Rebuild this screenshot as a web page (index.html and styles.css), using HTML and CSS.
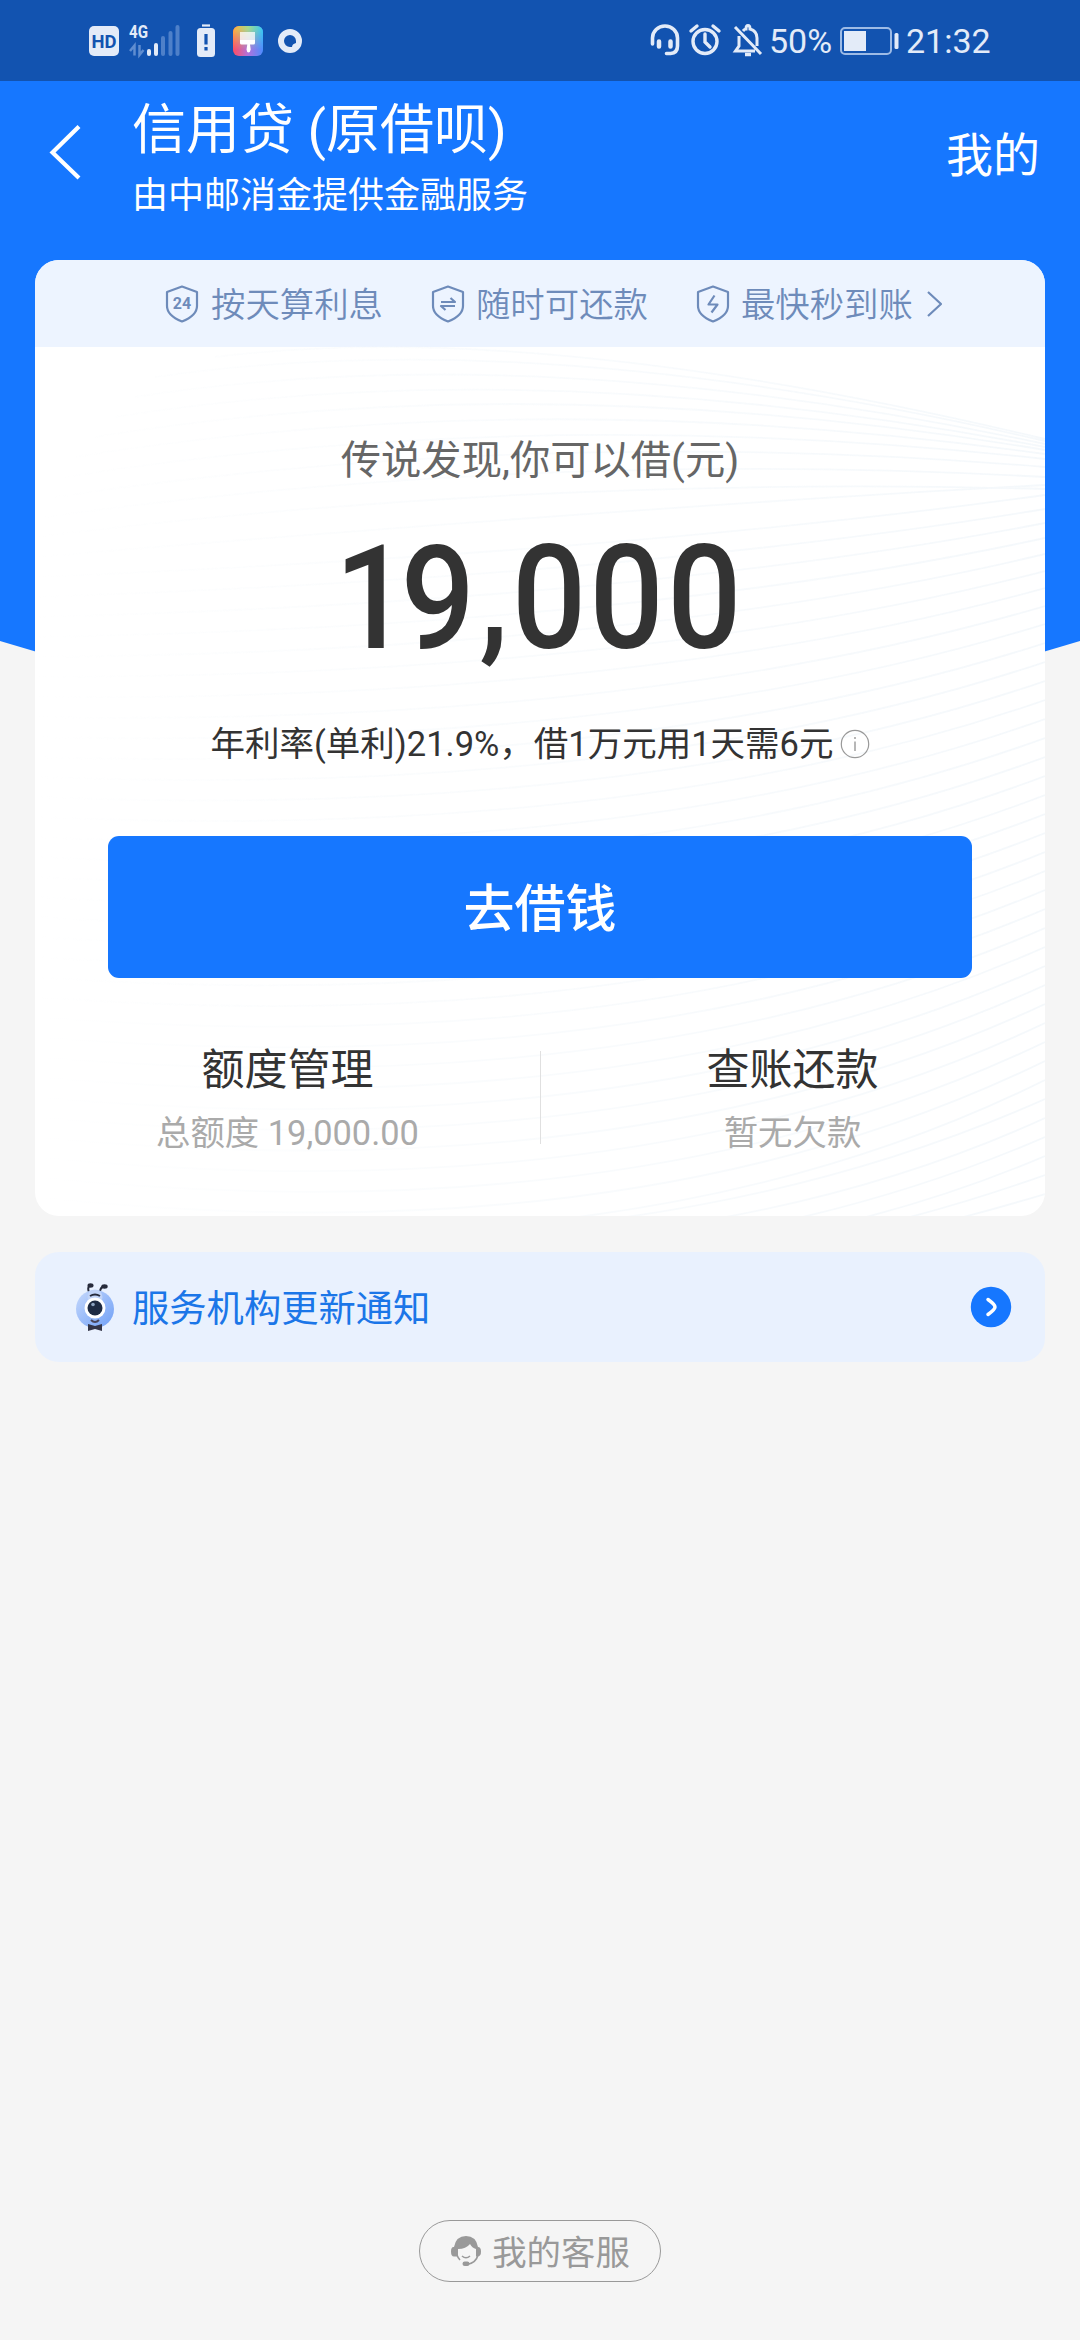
FILE: index.html
```html
<!DOCTYPE html>
<html lang="zh-CN">
<head>
<meta charset="utf-8">
<title>信用贷</title>
<link rel="stylesheet" href="styles.css">
</head>
<body>
<div class="screen">
  <div class="statusbar">
    <div class="status-left">
      <svg class="ic-hd" width="30" height="30" viewBox="0 0 30 30"><rect width="30" height="30" rx="5" fill="#e3ebf8"/><text x="15" y="22" text-anchor="middle" textLength="25" lengthAdjust="spacingAndGlyphs" class="hd-text">HD</text></svg>
      <svg class="ic-signal" width="52" height="34" viewBox="0 0 52 34"><text x="0" y="15" textLength="19" lengthAdjust="spacingAndGlyphs" class="g-text">4G</text><g fill="#e3ebf8"><rect x="18" y="26" width="4" height="7" rx="2"/><rect x="25" y="20" width="4" height="13" rx="2"/></g><g fill="#4e80c9"><rect x="32" y="13" width="4" height="20" rx="2"/><rect x="39.500" y="8" width="4" height="25" rx="2"/><rect x="46.500" y="2" width="4" height="31" rx="2"/></g><path d="M1 28l4.500-5.500v10M10.500 22v10l4-5" fill="none" stroke="#5f8dd0" stroke-width="2.500"/></svg>
      <svg class="ic-alert" width="18" height="33" viewBox="0 0 18 33"><path d="M5 1.500h8" stroke="#e3ebf8" stroke-width="2.200"/><rect y="4" width="18" height="29" rx="3.500" fill="#e3ebf8"/><path d="M9 10v10.500M9 23v3.500" stroke="#1253b0" stroke-width="3.200"/></svg>
      <svg class="ic-brush" width="30" height="30" viewBox="0 0 30 30"><defs><linearGradient id="g1"><stop offset="0" stop-color="#ff4d62"/><stop offset=".5" stop-color="#b072dd"/><stop offset="1" stop-color="#4c8dff"/></linearGradient><linearGradient id="g2" x2="1" y2="0"><stop offset="0" stop-color="#ffad3c"/><stop offset=".5" stop-color="#a7d98c"/><stop offset="1" stop-color="#35c9f5"/></linearGradient><linearGradient id="fade" x2="0" y2="1"><stop offset=".1" stop-color="#fff"/><stop offset=".8" stop-color="#000"/></linearGradient><mask id="m"><rect width="30" height="30" fill="url(#fade)"/></mask></defs><rect width="30" height="30" rx="6" fill="url(#g1)"/><rect width="30" height="30" rx="6" fill="url(#g2)" mask="url(#m)"/><path d="M7 6h15v8H7z" fill="#fff" opacity=".75"/><path d="M7 14h15v3q0 1.500-1.500 1.500H17l.7 5q-.5 3-2.200 3t-2-3l.8-5H8.500Q7 18.500 7 17z" fill="#fff"/></svg>
      <svg class="ic-ring" width="24" height="24" viewBox="0 0 24 24"><path fill-rule="evenodd" fill="#e3ebf8" d="M12 0a12 12 0 1 1 0 24a12 12 0 0 1 0-24zM12 6a6 6 0 0 0 0 12h2q0-3 4-4v-2a6 6 0 0 0-6-6z"/></svg>
    </div>
    <div class="status-right">
      <svg class="ic-head" width="30" height="32" viewBox="0 0 30 32" fill="none" stroke="#e3ebf8" stroke-linecap="round"><path d="M2.500 20v-6a12.500 12 0 0 1 25 0v8q0 7-7 7.500h-4" stroke-width="3.600"/><path d="M9 17.500v5M20.500 17.500v5" stroke-width="4.500"/></svg>
      <svg class="ic-alarm" width="32" height="32" viewBox="0 0 32 32" fill="none" stroke="#e3ebf8" stroke-width="3.400"><circle cx="16" cy="17.500" r="12"/><path d="M16 10v8l5 5M2 7l6-5M24 2l6 5" stroke-linecap="round"/></svg>
      <svg class="ic-bell" width="29" height="33" viewBox="0 0 29 33" fill="none" stroke="#e3ebf8" stroke-width="3"><path d="M2 3l26 27M6 12v10l-3.500 5H22M10 7q1.500-2 3-2q0-3.500 2-3.500t2 3.500q7 2 7 9v8"/><path d="M12 30.500h6" stroke-width="3.500"/></svg>
      <span class="percent">50%</span>
      <svg class="ic-batt" width="59" height="28" viewBox="0 0 59 28"><rect x="1" y="1" width="50" height="26" rx="4" fill="none" stroke="#9dbbe6" stroke-width="2"/><rect x="4" y="4" width="22" height="20" fill="#e3ebf8"/><rect x="54.500" y="6" width="4" height="16" rx="1.500" fill="#e3ebf8"/></svg>
      <span class="clock">21:32</span>
    </div>
  </div>

  <header class="navbar">
    <svg class="back" width="34" height="54" viewBox="0 0 34 54"><path d="M32 1.500L5.500 27.500L32 53" fill="none" stroke="#fff" stroke-width="4.200"/></svg>
    <div class="titles">
      <h1>信用贷 (原借呗)</h1>
      <p>由中邮消金提供金融服务</p>
    </div>
    <a class="mine">我的</a>
  </header>

  <main class="content">
    <section class="card">
      <div class="perks">
        <div class="perk"><svg width="34" height="38" viewBox="0 0 34 38"><path class="line" d="M17 1.500L32 7v14q0 9.500-15 15.500Q2 30.500 2 21V7z"/><text x="17" y="24" text-anchor="middle" class="n24">24</text></svg><span>按天算利息</span></div>
        <div class="perk"><svg width="34" height="38" viewBox="0 0 34 38"><path class="line" d="M17 1.500L32 7v14q0 9.500-15 15.500Q2 30.500 2 21V7z"/><path class="line" d="M10 17h14l-4.500-4M24 21H10l4.500 4"/></svg><span>随时可还款</span></div>
        <div class="perk"><svg width="34" height="38" viewBox="0 0 34 38"><path class="line" d="M17 1.500L32 7v14q0 9.500-15 15.500Q2 30.500 2 21V7z"/><path class="line" d="M18.500 10.500l-6 9h9l-6 8"/></svg><span>最快秒到账</span></div>
        <svg class="perk-more" width="18" height="28" viewBox="0 0 18 28"><path class="line" d="M2 2l13 12L2 26"/></svg>
      </div>
      <div class="offer">
        <svg class="waves" viewBox="0 0 1010 869" fill="none">
          <defs>
            <linearGradient id="wf"><stop offset="0" stop-color="#f4f8fb" stop-opacity="0"/><stop offset=".5" stop-color="#f4f8fb" stop-opacity=".7"/><stop offset="1" stop-color="#f1f6fa"/></linearGradient>
          </defs>
          <g stroke="url(#wf)" stroke-width="1.800">
            <path d="M180 10Q500-30 1010 92M120 30Q500-25 1010 94M100 50Q500-12 1010 97M80 70Q500 3 1010 100M60 90Q500 18 1010 103M40 110Q500 36 1010 107M30 130Q500 56 1010 112M20 150Q500 78 1010 120M10 170Q500 102 1010 130M0 190Q500 128 1010 142"/>
            <path d="M0 210Q600 160 1010 138M0 230Q600 205 1010 148M0 250Q600 230 1010 162M0 270Q600 255 1010 176M0 290Q600 280 1010 191M0 310Q600 305 1010 207M0 330Q600 330 1010 224M0 350Q600 355 1010 241M0 370Q600 380 1010 259M0 390Q600 404 1010 277M0 410Q600 428 1010 296M0 430Q600 452 1010 315M0 450Q600 474 1010 334M0 470Q600 496 1010 353M0 490Q600 518 1010 372"/>
            <path d="M0 510Q600 540 1010 391M0 530Q600 562 1010 410M0 550Q600 584 1010 429M0 570Q600 606 1010 448M0 590Q600 628 1010 467M0 610Q600 650 1010 486M0 630Q600 672 1010 505M0 650Q600 694 1010 524M0 670Q600 716 1010 543M0 690Q600 738 1010 562M0 710Q600 760 1010 581M0 730Q600 782 1010 600M0 750Q600 804 1010 619M0 770Q600 826 1010 638M0 790Q600 848 1010 657M0 810Q600 870 1010 676M0 830Q600 892 1010 695M0 850Q600 914 1010 714M0 870Q600 936 1010 733M300 890Q700 890 1010 752M400 900Q750 890 1010 771M500 910Q780 890 1010 790M600 910Q820 890 1010 809M700 905Q850 885 1010 828M800 900Q900 880 1010 847"/>
          </g>
        </svg>
        <p class="caption">传说发现,你可以借(元)</p>
        <div class="amount"><span class="digits"><b>1</b>9<i>,</i>000</span></div>
        <p class="rate">年利率(单利)21.9%，借1万元用1天需6元<svg width="30" height="30" viewBox="0 0 30 30"><circle cx="15" cy="15" r="13.700" fill="none" stroke="#999" stroke-width="1.200"/><path d="M15 12.500v9.500M15 8v2" stroke="#999" stroke-width="1.400"/></svg></p>
        <button class="borrow"><span>去借钱</span></button>
        <div class="entries">
          <div class="entry"><h2>额度管理</h2><p>总额度 19,000.00</p></div>
          <div class="entry"><h2>查账还款</h2><p>暂无欠款</p></div>
        </div>
      </div>
    </section>

    <section class="notice">
      <svg class="mascot" width="40" height="50" viewBox="0 0 40 50"><defs><linearGradient id="mb" x1="0" y1="0" x2="1" y2="1"><stop offset="0" stop-color="#c6d9fc"/><stop offset="1" stop-color="#6f9ff6"/></linearGradient></defs><path d="M14 10q-2-4 1-7M25 10q0-5 5-6" fill="none" stroke="#272b3b" stroke-width="2"/><ellipse cx="15.500" cy="3.500" rx="3" ry="2.200" fill="#272b3b"/><ellipse cx="29.500" cy="4.500" rx="3.200" ry="2.200" fill="#272b3b"/><circle cx="20" cy="27" r="19" fill="url(#mb)"/><circle cx="20" cy="15" r="7.500" fill="#c1d4f8"/><path d="M15 14q5-3 10 0" stroke="#272b3b" stroke-width="2" fill="none"/><circle cx="20" cy="26" r="10.500" fill="#fff"/><circle cx="20" cy="26" r="7.500" fill="#1e2b43"/><circle cx="18" cy="22.500" r="1.800" fill="#8da3bf"/><path d="M16 38q4 4 8 0" stroke="#4a4559" stroke-width="2" fill="none"/><path d="M13 42l7 2 7-2v7l-7-2-7 2z" fill="#343547"/></svg>
      <span class="notice-text">服务机构更新通知</span>
      <svg class="go" width="42" height="42" viewBox="0 0 42 42"><circle cx="21" cy="21" r="20.200" fill="#1677ff"/><path d="M18 13.500q7 5 7 7.500t-7 7.500" fill="none" stroke="#fff" stroke-width="3.500" stroke-linecap="round" stroke-linejoin="round"/></svg>
    </section>
  </main>

  <footer class="footer">
    <a class="service">
      <svg width="32" height="32" viewBox="0 0 32 32"><path d="M4 12Q6 1 16 1t12 11q3 0 3 4.500t-3 5h-2V14q-4-1-6-5-4 5-12 5v7.500H4q-3 0-3-5T4 12z" fill="#999"/><path d="M28 20q-2 8-11 9.500M7 20q1 3 3 5M12 21q4 3.500 8 0" fill="none" stroke="#999" stroke-width="1.600"/><rect x="12.500" y="26.500" width="7" height="4.500" rx="2.200" fill="#999"/></svg>
      <span>我的客服</span>
    </a>
  </footer>
</div>
</body>
</html>
```
FILE: styles.css
```css
* { box-sizing: border-box; margin: 0; padding: 0; }
body { background: #f5f5f5; font-family: Roboto, "Noto Sans CJK SC", sans-serif; color: #333; }
svg { display: block; flex: none; overflow: visible; }
.screen { width: 1080px; height: 2340px; display: flex; flex-direction: column; overflow: hidden; background: #f5f5f5 linear-gradient(#1677ff, #1677ff) 0 0 / 100% 641px no-repeat; position: relative; isolation: isolate; }
.screen::before { content: ""; position: absolute; z-index: -1; top: 641px; left: 0; width: 1080px; height: 32px; background: #1677ff; clip-path: polygon(0 0, 100% 0, 90% 100%, 10% 100%); }

.statusbar { height: 81px; background: #1253b0; color: #e3ebf8; display: flex; justify-content: space-between; align-items: flex-start; padding: 0 90px 0 89px; flex: none; }
.status-left, .status-right { display: flex; align-items: flex-start; }
.ic-hd { margin-top: 26px; }
.ic-signal { margin: 23px 0 0 10px; }
.ic-alert { margin: 24px 0 0 16px; }
.ic-brush { margin: 26px 0 0 18px; }
.ic-ring { margin: 29px 0 0 15px; }
.hd-text { font: 700 19px Roboto, sans-serif; fill: #1253b0; }
.g-text { font: 700 19px Roboto, sans-serif; fill: #e3ebf8; }
.ic-head { margin-top: 24px; }
.ic-alarm { margin: 24px 0 0 9px; }
.ic-bell { margin: 24px 0 0 12px; }
.percent, .clock { font-size: 34px; line-height: 40px; margin-top: 21px; }
.percent { width: 63px; margin-left: 7px; }
.ic-batt { margin: 27px 0 0 8px; }
.clock { margin-left: 7px; width: 84px; }

.navbar { height: 179px; flex: none; display: flex; align-items: flex-start; padding: 0 40px 0 47px; color: #fff; }
.back { margin-top: 44px; }
.titles { margin: 12px 0 0 51px; flex: 1; }
.titles h1 { font-size: 54px; font-weight: 400; line-height: 76px; }
.titles p { font-size: 36px; line-height: 54px; }
.mine { font-size: 47px; line-height: 66px; margin-top: 42px; }

.content { padding: 0 35px; flex: 1; }
.card { height: 956px; border-radius: 24px; background: #fff; overflow: hidden; }
.perks { height: 87px; background: #edf4ff; display: flex; align-items: center; padding-left: 130px; color: #6e8bba; font-weight: 350; font-size: 34.4px; }
.perk { display: flex; align-items: center; gap: 12px; margin-right: 48px; }
.perk + .perk { gap: 11px; }
.perk span { margin-top: -3px; }
.line { fill: none; stroke: #6e8bba; stroke-width: 2.2; stroke-linejoin: round; }
.n24 { font: 700 16px Roboto, sans-serif; fill: #6e8bba; }
.perk-more { margin-left: -35px; }

.offer { height: 869px; display: flex; flex-direction: column; align-items: center; position: relative; isolation: isolate; }
.waves { position: absolute; inset: 0; width: 1010px; height: 869px; z-index: -1; opacity: .75; }
.caption { margin-top: 85px; font-size: 40.3px; line-height: 58px; color: #666; }
.amount { height: 160px; margin-top: 28px; line-height: 160px; font-size: 145px; font-weight: 500; white-space: nowrap; }
.digits { display: inline-block; transform: scaleX(.9); letter-spacing: 3.8px; }
.digits b { font-weight: 500; letter-spacing: -9px; }
.digits i { font-style: normal; padding-left: 1px; display: inline-block; transform: translateY(-5px); }
.rate { margin-top: 38px; font-size: 34.5px; line-height: 56px; display: flex; align-items: center; gap: 6px; white-space: nowrap; }
.borrow { margin-top: 64px; width: 864px; height: 142px; border: 0; border-radius: 11px; background: #1677ff; color: #fff; font: 500 51px Roboto, "Noto Sans CJK SC", sans-serif; padding-bottom: 5px; }
.entries { width: 100%; margin-top: 73px; height: 93px; display: flex; background: linear-gradient(#e0e0e0, #e0e0e0) 505px 0 / 1px 93px no-repeat; }
.entry { flex: 1; text-align: center; }
.entry h2 { font-size: 43px; font-weight: 400; line-height: 62px; margin-top: -12px; }
.entry p { font-size: 34.4px; line-height: 50px; margin-top: 7px; color: #aaa; }

.notice { margin-top: 36px; height: 110px; border-radius: 24px; background: #e9f1fe; display: flex; align-items: center; padding: 0 33px 0 40px; }
.notice-text { flex: 1; margin: -2px 0 0 17px; font-size: 37.3px; color: #1b76e8; }

.footer { display: flex; justify-content: center; padding-bottom: 58px; }
.service { width: 242px; height: 62px; border: 1px solid #999; border-radius: 31px; display: flex; align-items: center; justify-content: center; gap: 10px; color: #999; font-size: 34.4px; }
.service span { margin-top: -3px; }
```
